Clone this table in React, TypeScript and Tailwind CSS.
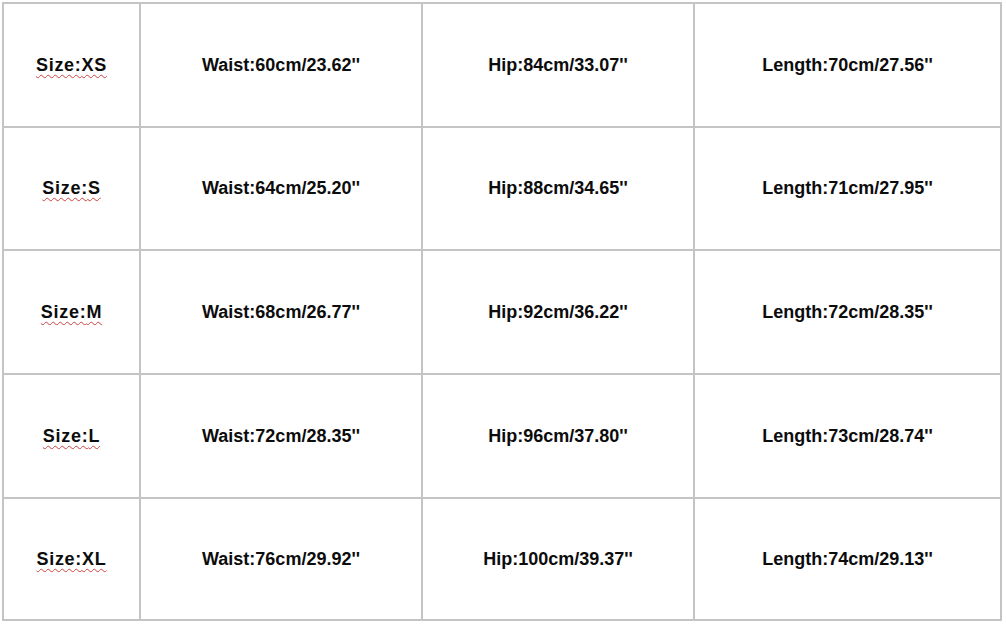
const rows = [
    { size: "XS", waist: "60cm/23.62''", hip: "84cm/33.07''", length: "70cm/27.56''" },
    { size: "S", waist: "64cm/25.20''", hip: "88cm/34.65''", length: "71cm/27.95''" },
    { size: "M", waist: "68cm/26.77''", hip: "92cm/36.22''", length: "72cm/28.35''" },
    { size: "L", waist: "72cm/28.35''", hip: "96cm/37.80''", length: "73cm/28.74''" },
    { size: "XL", waist: "76cm/29.92''", hip: "100cm/39.37''", length: "74cm/29.13''" },
];

const cell =
    "flex items-center justify-center border-r-2 border-b-2 border-[#c4c4c4]";

export default function App() {
    return (
        <div
            className="h-[624px] w-[1006px] bg-white pl-[2px] pt-[2px] text-[18px] font-bold text-[#0c0c0c]"
            style={{ fontFamily: '"Liberation Sans", Arial, sans-serif' }}
        >
            <div className="grid w-[1000px] grid-cols-[137px_282px_272px_307px] grid-rows-[124px_123px_124px_124px_122px] border-t-2 border-l-2 border-[#c4c4c4]">
                {rows.map((r) => (
                    <div key={r.size} className="contents">
                        <div className={cell}>
                            <span className="tracking-[0.04em] underline decoration-[#d04040] decoration-wavy decoration-1 underline-offset-[3px]">
                                Size:{r.size}
                            </span>
                        </div>
                        <div className={cell}>Waist:{r.waist}</div>
                        <div className={cell}>Hip:{r.hip}</div>
                        <div className={cell}>Length:{r.length}</div>
                    </div>
                ))}
            </div>
        </div>
    );
}
